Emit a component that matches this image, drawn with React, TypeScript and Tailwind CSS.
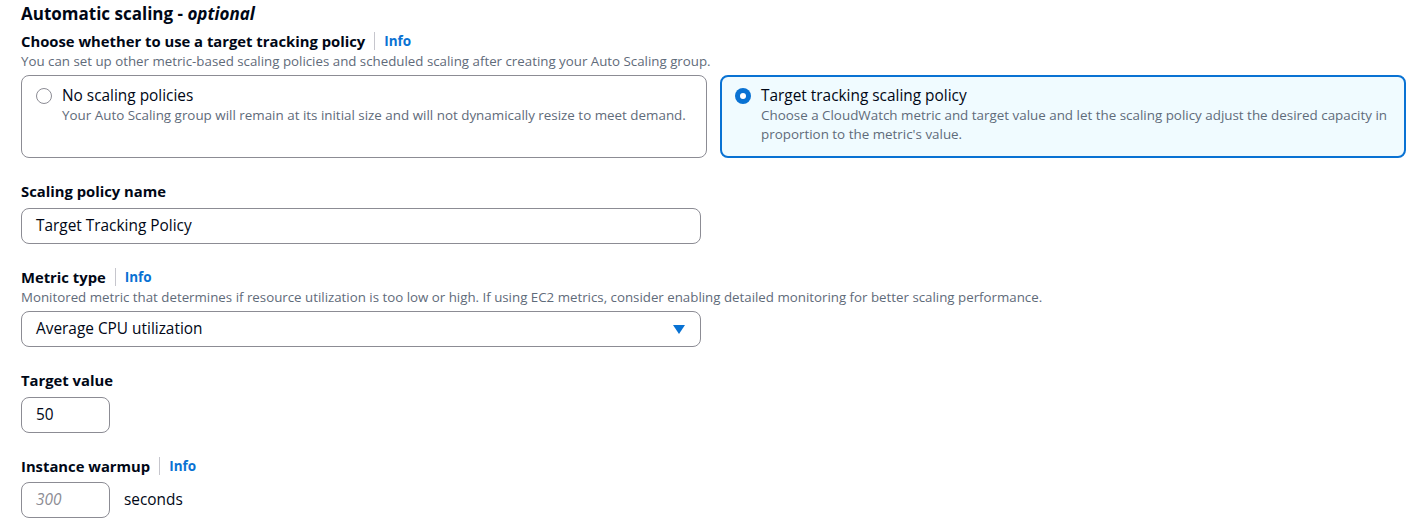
import React from 'react';

function Info() {
  return (
    <span className="flex items-center">
      <span className="mx-[9px] h-[18px] w-px bg-[#c6c6cd]"></span>
      <span className="text-[13.5px] font-bold text-[#0972d3]">Info</span>
    </span>
  );
}

function Radio({ checked }: { checked: boolean }) {
  return checked ? (
    <span className="mt-[2px] flex h-[16px] w-[16px] shrink-0 items-center justify-center rounded-full bg-[#0972d3]">
      <span className="h-[6px] w-[6px] rounded-full bg-white"></span>
    </span>
  ) : (
    <span className="mt-[2px] h-[16px] w-[16px] shrink-0 rounded-full border border-[#8c8c94] bg-white"></span>
  );
}

export default function App() {
  return (
    <div className="min-h-screen bg-white pl-[21px] pr-[20px] pt-[3px] text-[#000716] font-['Open_Sans',sans-serif]">
      <h2 className="text-[17px] font-bold leading-[22px]">
        Automatic scaling - <i className="font-bold">optional</i>
      </h2>

      <div className="mt-[5px] flex items-center leading-[22px]">
        <span className="text-[14.8px] font-bold">Choose whether to use a target tracking policy</span>
        <Info />
      </div>
      <p className="text-[13.3px] leading-[18px] text-[#5f6b7a]">
        You can set up other metric-based scaling policies and scheduled scaling after creating your Auto Scaling group.
      </p>

      <div className="mt-[5px] grid grid-cols-2 gap-[13px]">
        <div className="flex h-[83px] gap-[10px] rounded-[8px] border border-[#8c8c94] px-[14px] pt-[10px]">
          <Radio checked={false} />
          <div>
            <div className="text-[15.4px] leading-[20px]">No scaling policies</div>
            <div className="text-[13.4px] leading-[19px] text-[#5f6b7a]">
              Your Auto Scaling group will remain at its initial size and will not dynamically resize to meet demand.
            </div>
          </div>
        </div>
        <div className="flex h-[83px] gap-[10px] rounded-[8px] border-2 border-[#0972d3] bg-[#f0fbff] pl-[13px] pr-[14px] pt-[9px]">
          <Radio checked={true} />
          <div>
            <div className="text-[15.4px] leading-[20px]">Target tracking scaling policy</div>
            <div className="text-[13.4px] leading-[19px] text-[#5f6b7a]">
              Choose a CloudWatch metric and target value and let the scaling policy adjust the desired capacity in proportion to the metric's value.
            </div>
          </div>
        </div>
      </div>

      <div className="mt-[22px] text-[14.8px] font-bold leading-[22px]">Scaling policy name</div>
      <div className="mt-[6px] flex h-[36px] w-[680px] items-center rounded-[8px] border border-[#8c8c94] px-[14px] text-[15.4px]">
        Target Tracking Policy
      </div>

      <div className="mt-[22px] flex items-center leading-[22px]">
        <span className="text-[14.8px] font-bold">Metric type</span>
        <Info />
      </div>
      <p className="text-[13.3px] leading-[18px] text-[#5f6b7a]">
        Monitored metric that determines if resource utilization is too low or high. If using EC2 metrics, consider enabling detailed monitoring for better scaling performance.
      </p>
      <div className="mt-[5px] flex h-[36px] w-[680px] items-center justify-between rounded-[8px] border border-[#8c8c94] pl-[14px] pr-[15px] text-[15.4px]">
        <span>Average CPU utilization</span>
        <svg width="12" height="9" viewBox="0 0 12 9">
          <path d="M0 0 H12 L6 9 Z" fill="#0972d3" />
        </svg>
      </div>

      <div className="mt-[22px] text-[14.8px] font-bold leading-[22px]">Target value</div>
      <div className="mt-[6px] flex h-[36px] w-[89px] items-center rounded-[8px] border border-[#8c8c94] px-[14px] text-[15.4px]">
        50
      </div>

      <div className="mt-[22px] flex items-center leading-[22px]">
        <span className="text-[14.8px] font-bold">Instance warmup</span>
        <Info />
      </div>
      <div className="mt-[5px] flex items-center gap-[14px]">
        <div className="flex h-[36px] w-[89px] items-center rounded-[8px] border border-[#8c8c94] px-[14px] text-[15.4px] italic text-[#8c8c94]">
          300
        </div>
        <span className="text-[15.4px]">seconds</span>
      </div>
    </div>
  );
}
